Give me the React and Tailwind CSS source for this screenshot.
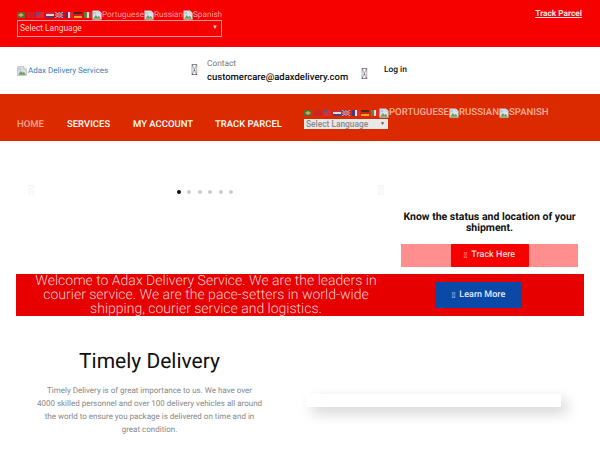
function Flag({ name }) {
  return (
    <svg width="8" height="6" viewBox="0 0 8 6" className="shrink-0 opacity-85">
      {name === "ar" && (
        <>
          <rect width="8" height="6" fill="#3f7a3a" />
          <path d="M4 1l3 2-3 2-3-2z" fill="#c9c070" />
        </>
      )}
      {name === "zh" && <rect width="8" height="6" fill="#c8232a" />}
      {name === "tw" && (
        <>
          <rect width="8" height="6" fill="#d8303a" />
          <rect width="4" height="3" fill="#4a5aa8" />
        </>
      )}
      {name === "nl" && (
        <>
          <rect width="8" height="2" fill="#c03048" />
          <rect y="2" width="8" height="2" fill="#f4f4f4" />
          <rect y="4" width="8" height="2" fill="#2a4a90" />
        </>
      )}
      {name === "en" && (
        <>
          <rect width="8" height="6" fill="#34407f" />
          <path d="M0 0l8 6M8 0L0 6" stroke="#f0e0e0" strokeWidth="1" />
          <path d="M4 0v6M0 3h8" stroke="#f0e0e0" strokeWidth="1.6" />
          <path d="M4 0v6M0 3h8" stroke="#c82030" strokeWidth="0.8" />
        </>
      )}
      {name === "fr" && (
        <>
          <rect width="3" height="6" fill="#25408f" />
          <rect x="3" width="2" height="6" fill="#f4f4f4" />
          <rect x="5" width="3" height="6" fill="#d8303a" />
        </>
      )}
      {name === "de" && (
        <>
          <rect width="8" height="2" fill="#3a2a20" />
          <rect y="2" width="8" height="2" fill="#d02020" />
          <rect y="4" width="8" height="2" fill="#f0c020" />
        </>
      )}
      {name === "it" && (
        <>
          <rect width="3" height="6" fill="#3a9a50" />
          <rect x="3" width="2" height="6" fill="#f4f4f4" />
          <rect x="5" width="3" height="6" fill="#d8303a" />
        </>
      )}
    </svg>
  );
}

function BrokenImage() {
  return (
    <svg width="10" height="10" viewBox="0 0 16 16" className="shrink-0">
      <path d="M1 1h10l4 4v10H1z" fill="#dfe3ea" stroke="#a8a8a8" />
      <path d="M11 1v4h4" fill="#ffffff" stroke="#a8a8a8" />
      <path d="M2 14l4-6 3 3 2-2 3 5z" fill="#6aa05a" />
      <path d="M2 3h5v4H2z" fill="#b8c8e0" />
    </svg>
  );
}

const flags = ["ar", "zh", "tw", "nl", "en", "fr", "de", "it"];

function LangLinks({ upper }) {
  return (
    <div className={`flex h-[10px] items-center whitespace-nowrap ${upper ? "text-[9.6px] font-medium uppercase text-[#ffb09a]" : "text-[8.2px] text-[#ffa0a0]"}`}>
      <div className="mr-[0.5px] flex items-center gap-[1.5px]">
        {flags.map((f) => (
          <Flag key={f} name={f} />
        ))}
      </div>
      <BrokenImage />
      <span>Portuguese</span>
      <BrokenImage />
      <span>Russian</span>
      <BrokenImage />
      <span>Spanish</span>
    </div>
  );
}

function App() {
  return (
    <div className="h-[450px] w-[600px] overflow-hidden bg-white font-['Roboto',sans-serif] text-[12px] text-[#222222] [text-rendering:geometricPrecision]">
      {/* top bar */}
      <div className="flex h-[47px] justify-between bg-[#f60000] pl-[17px] pr-[18px] pt-[10px]">
        <div className="w-[205px]">
          <LangLinks />
          <div className="relative">
            <select className="block h-[17px] w-[205px] appearance-none border border-[#ff9a9a] bg-transparent pl-[2px] text-[8.4px] text-[#ffd0d0]">
              <option>Select Language</option>
            </select>
            <span className="absolute right-[4px] top-[3px] text-[6px] text-[#ffd0d0]">▼</span>
          </div>
        </div>
        <a className="-mt-[1px] text-[8.3px] font-bold leading-[11px] text-[#ffe0e0] underline">Track Parcel</a>
      </div>

      {/* logo and contact */}
      <div className="flex h-[47px] items-center pl-[17px]">
        <div className="flex w-[174px] items-center text-[8px] text-[#3b82c4]">
          <BrokenImage />
          <span className="pl-[1px]">Adax Delivery Services</span>
        </div>
        <span className="w-[16px] text-[15px] leading-[13px] text-[#333333]">{"\uf0e0"}</span>
        <div className="w-[154px]">
          <div className="text-[8.3px] leading-[13px] text-[#777777]">Contact</div>
          <div className="text-[9.5px] font-medium leading-[13px] text-[#111111]">customercare@adaxdelivery.com</div>
        </div>
        <span className="mt-[7px] w-[23px] text-[15px] leading-[13px] text-[#333333]">{"\uf007"}</span>
        <span className="text-[8.4px] font-medium text-[#111111]">Log in</span>
      </div>

      {/* nav */}
      <nav className="flex h-[47px] items-start bg-[#dc2a00] pl-[17px] text-[9.5px] font-medium uppercase leading-[12px] text-white">
        <a className="mt-[25px] w-[50px] text-[#ffa68f]">Home</a>
        <a className="mt-[25px] w-[66px]">Services</a>
        <a className="mt-[25px] w-[82px]">My Account</a>
        <a className="mt-[25px] w-[89px]">Track Parcel</a>
        <div className="mt-[14px]">
          <LangLinks upper />
          <div className="relative mt-[1px] w-[84px]">
            <select className="block h-[10px] w-[84px] appearance-none bg-[#e9e9e9] pl-[2px] text-[8.4px] normal-case leading-[10px] text-[#888888]">
              <option>Select Language</option>
            </select>
            <span className="absolute right-[3px] top-[0px] text-[5px] leading-[10px] text-[#555555]">▼</span>
          </div>
        </div>
      </nav>

      {/* slider and tracking */}
      <section className="flex h-[133px]">
        <div className="relative w-[390px]">
          <span className="absolute left-[28px] top-[43px] text-[14px] leading-[14px] text-[#eeeeee]">{"\uf104"}</span>
          <span className="absolute left-[378px] top-[43px] text-[14px] leading-[14px] text-[#eeeeee]">{"\uf105"}</span>
          <div className="flex justify-center gap-[6.6px] pl-[20px] pt-[49px]">
            <span className="h-[4px] w-[4px] rounded-full bg-[#111111]" />
            {[0, 1, 2, 3, 4].map((i) => (
              <span key={i} className="h-[4px] w-[4px] rounded-full bg-[#cccccc]" />
            ))}
          </div>
        </div>
        <div className="pl-[11px] pt-[70px]">
          <p className="w-[177px] text-center text-[10.5px] font-bold leading-[11px] text-[#111111]">
            Know the status and location of your shipment.
          </p>
          <div className="mt-[11px] flex h-[23px] w-[177px] justify-center bg-[#ff8f8f]">
            <a className="flex w-[78px] items-center justify-center gap-[4px] rounded-[1px] bg-[#f60000] pt-[1px] text-[9px] font-medium text-[#ffd8d8]">
              <span className="text-[8px]">{"\uf14a"}</span>
              Track Here
            </a>
          </div>
        </div>
      </section>

      {/* welcome band */}
      <section className="mx-[16px] flex h-[42px] w-[568px] bg-[#e60000]">
        <p className="w-[380px] px-[10px] text-center text-[14px] font-light leading-[14px] text-[#ffd0d0]">
          Welcome to Adax Delivery Service. We are the leaders in courier service. We are the pace-setters in world-wide shipping, courier service and logistics.
        </p>
        <a className="ml-[39px] mt-[8px] flex h-[26px] w-[87px] items-center justify-center gap-[4px] bg-[#0a4aa6] pt-[2px] text-[9px] font-medium text-[#e0e8ff]">
          <span className="text-[8px]">{"\uf0a9"}</span>
          Learn More
        </a>
      </section>

      {/* timely delivery */}
      <section className="flex pt-[32px]">
        <div className="ml-[35px] w-[229px] text-center">
          <h2 className="text-[21px] leading-[28px] text-[#111111]">Timely Delivery</h2>
          <p className="mt-[8px] text-[8px] leading-[13px] text-[#888888]">
            Timely Delivery is of great importance to us. We have over
            <br />
            4000 skilled personnel and over 100 delivery vehicles all around
            <br />
            the world to ensure you package is delivered on time and in
            <br />
            great condition.
          </p>
        </div>
        <div className="ml-[42px] mt-[46px] h-[13px] w-[255px] bg-white shadow-[6px_6px_14px_rgba(0,0,0,0.18)]" />
      </section>
    </div>
  );
}

export default App;
